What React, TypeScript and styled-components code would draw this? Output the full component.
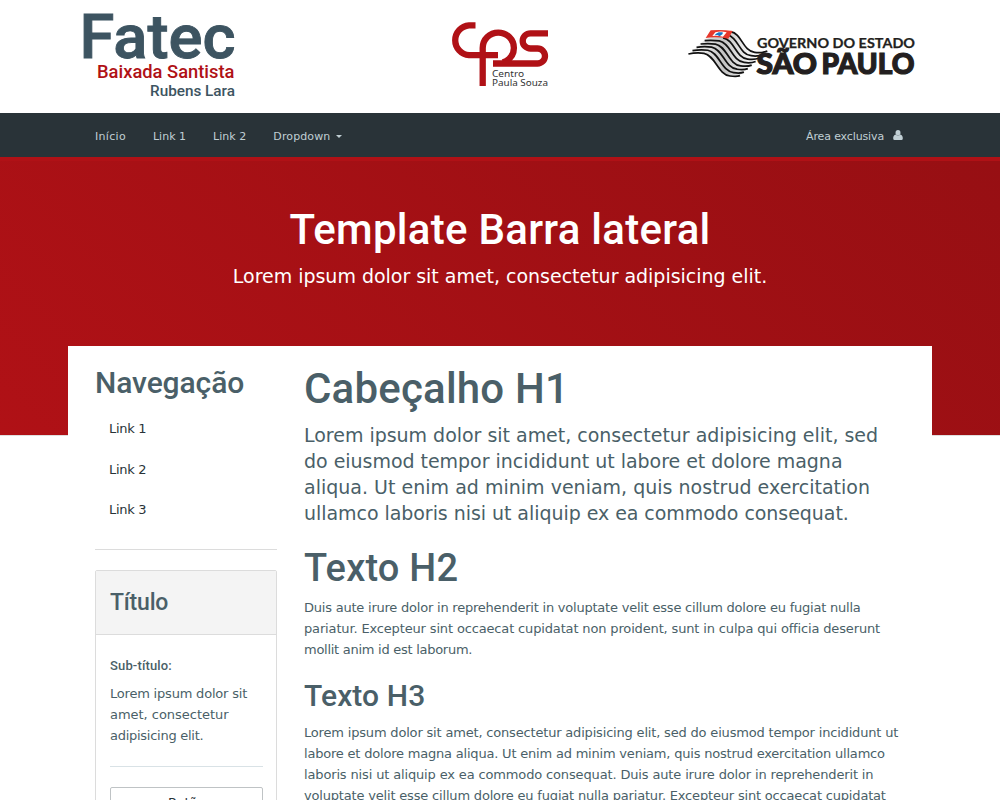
import React from 'react';
import styled, { createGlobalStyle } from 'styled-components';

const Global = createGlobalStyle`
  * { box-sizing: border-box; }
  html, body { margin: 0; height: 800px; overflow: hidden; background: #fff; }
  body { font-family: Verdana, "DejaVu Sans", sans-serif; font-size: 13px; line-height: 21px; color: #4a5f68; }
  h1, h2, h3, p, hr { margin: 0; }
`;

const Page = styled.div`
  height: 800px;
  overflow: hidden;
`;
const Header = styled.header`
  height: 113px;
  display: flex;
  padding-left: 77px;
`;
const FatecLogo = styled.svg` width: 164px; height: 104px; flex: none; overflow: visible; `;
const CpsLogo = styled.svg` width: 104px; height: 72px; flex: none; margin: 19px 0 0 208px; `;
const SpLogo = styled.svg` width: 232px; height: 52px; flex: none; margin: 27px 0 0 133px; `;

const Nav = styled.nav`
  height: 44px;
  background: #293338;
  color: #c0cfd4;
  display: flex;
  align-items: center;
  padding: 2px 97px 0 95px;
  font-size: 11px;
`;
const NavItem = styled.a<{ $gap?: number; $spacing?: number }>`
  display: inline-flex;
  align-items: center;
  white-space: nowrap;
  margin-right: ${p => p.$gap ?? 0}px;
  letter-spacing: ${p => p.$spacing ?? 0}px;
`;
const Caret = styled.span`
  margin-left: 6px;
  border: 3px solid transparent;
  border-top-color: #c0cfd4;
  border-bottom: 0;
`;
const Spacer = styled.div` flex: 1; `;
const UserIcon = styled.svg` width: 10px; height: 10px; margin: -2px 0 0 9px; fill: #c0cfd4; `;

const Hero = styled.section`
  height: 279px;
  border-top: 4px solid #b01116;
  border-bottom: 1px solid #dfdfdf;
  background: linear-gradient(45deg, #b01116, #970f13);
  color: #fff;
  text-align: center;
  padding-top: 44px;
`;
const HeroTitle = styled.h1`
  font: 500 42px/50px Roboto, sans-serif;
  letter-spacing: .28px;
`;
const HeroText = styled.p`
  font-size: 19px;
  line-height: 26px;
  margin-top: 8px;
  letter-spacing: -.02px;
`;

const Container = styled.main`
  position: relative;
  width: 864px;
  height: 460px;
  margin: -90px auto 0;
  background: #fff;
  display: flex;
  padding: 0 27px;
`;
const Sidebar = styled.aside`
  width: 182px;
  margin-right: 27px;
  padding-top: 19px;
  flex: none;
`;
const Content = styled.article`
  flex: 1;
  padding-top: 18px;
  white-space: nowrap;
`;
const Heading = styled.h2<{ $size: number; $line: number; $top?: number; $spacing?: number }>`
  font: 500 ${p => p.$size}px/${p => p.$line}px Roboto, sans-serif;
  margin-top: ${p => p.$top ?? 0}px;
  letter-spacing: ${p => p.$spacing ?? 0}px;
`;
const SideLink = styled.a`
  display: block;
  height: 40.5px;
  padding-left: 14px;
  letter-spacing: -.3px;
  color: #293338;
`;
const LinkList = styled.nav` margin-top: 17px; height: 131px; `;
const Rule = styled.hr<{ $color: string }>`
  border: 0;
  height: 1px;
  background: ${p => p.$color};
`;
const Card = styled.section`
  margin-top: 20px;
  border: 1px solid #dcdcdc;
  border-radius: 2px;
  height: 300px;
`;
const CardHeader = styled.div`
  height: 64px;
  background: #f4f4f4;
  border-bottom: 1px solid #dcdcdc;
  padding: 18px 14px 0;
`;
const CardBody = styled.div` padding: 21px 13px 0 14px; `;
const CardText = styled.p` margin: 7px 0 20px; white-space: nowrap; `;
const Button = styled.div`
  margin-top: 20px;
  height: 38px;
  border: 1px solid #bfc3c5;
  border-radius: 2px;
  text-align: center;
  line-height: 29px;
  letter-spacing: -.2px;
  color: #293338;
`;
const Lead = styled.p`
  margin-top: 8px;
  font-size: 19px;
  line-height: 26px;
`;
const Text = styled.p<{ $top: number }>` margin-top: ${p => p.$top}px; `;
const Line = styled.span<{ $spacing: number }>`
  display: block;
  letter-spacing: ${p => p.$spacing}px;
`;

type Row = [string, number];
const Lines = ({ rows }: { rows: Row[] }) => (
  <>{rows.map(([t, s]) => <Line key={t} $spacing={s}>{t}</Line>)}</>
);

// The flag's stripes run from the crest of the wave down to its trough.
const STRIPES = 8;
const mix = (a: number, b: number, t: number) => a + (b - a) * t;
const stripePath = (i: number) => {
  const t = i / (STRIPES - 1);
  const cx = mix(152, 72, t), cy = mix(35, 100, t);
  const tx = mix(224, 150, t), ty = mix(97, 168, t);
  const ex = mix(262, 180, t), ey = mix(93, 167, t);
  const tail = `C${cx + 34} ${cy + 6} ${tx - 36} ${ty - 4} ${tx} ${ty}Q${tx + 20} ${ty + 3} ${ex} ${ey}`;
  if (i < 3) return `M${cx} ${cy}${tail}`;
  const k = i - 3;
  const sx = 74 - k * 12.2, sy = 62 + k * 10;
  return `M${sx} ${sy}Q${(sx + cx) / 2} ${cy - 3} ${cx} ${cy}${tail}`;
};

export default function App() {
  return (
    <Page>
      <Global />
      <Header>
        <FatecLogo viewBox="77 0 164 104" fontFamily="Roboto, sans-serif">
          <text x="79.500" y="58" fontSize="62" fontWeight="500" stroke="#3d5461" strokeWidth=".9" fill="#3d5461" textLength="156" lengthAdjust="spacingAndGlyphs">Fatec</text>
          <text x="97" y="78" fontSize="18" fontWeight="500" fill="#b01116" textLength="137.500" lengthAdjust="spacingAndGlyphs">Baixada Santista</text>
          <text x="150" y="96" fontSize="15" fontWeight="500" fill="#3d5461" textLength="85" lengthAdjust="spacingAndGlyphs">Rubens Lara</text>
        </FatecLogo>
        <CpsLogo viewBox="449 19 104 72">
          <g fill="none" stroke="#b01116" strokeWidth="6.300">
            <path d="M476.500 25.300H470A15 15 0 0 0 470 55.200H499" transform="translate(-1 0)" />
            <path d="M482.700 86V48A15.600 15.400 0 0 1 513.900 48C513.900 55 509 60 503 62.500" />
            <path d="M548 33.300H530.500A7.800 7.600 0 0 0 530.500 48.500H537.500A7.500 7.500 0 0 1 537.500 63.500H493" />
          </g>
          <g fill="#333" fontFamily="Noto Sans, sans-serif" fontSize="9.300">
            <text x="492" y="77" textLength="32" lengthAdjust="spacingAndGlyphs">Centro</text>
            <text x="492" y="86" textLength="56" lengthAdjust="spacingAndGlyphs">Paula Souza</text>
          </g>
        </CpsLogo>
        <SpLogo viewBox="686 27 232 52">
          <defs>
            <linearGradient id="wave" x1="0" y1="0" x2="1" y2="0">
              <stop offset="0" stopColor="#fff" />
              <stop offset=".45" stopColor="#c4c4c4" />
              <stop offset=".75" stopColor="#f2f2f2" />
              <stop offset="1" stopColor="#fff" />
            </linearGradient>
          </defs>
          <g transform="translate(680 20) scale(.3333)">
            <path d="M78 56L152 35C186 41 190 93 222 97L262 92L180 166L148 167C116 163 102 105 68 99L25 102Z" fill="url(#wave)" />
            <g fill="none" stroke="#111" strokeWidth="5.200">
              {Array.from({ length: STRIPES }, (_, i) => <path key={i} d={stripePath(i)} />)}
            </g>
            <path d="M92 31Q125 28 158 33L145 56Q110 49 77 54Z" fill="#e7372b" />
            <path d="M106 37Q122 32 140 37L129 50Q112 46 97 48Z" fill="#fff" />
            <path d="M108 41L116 37L128 37L128 42L119 49L112 45L104 46Z" fill="#1976c5" />
          </g>
          <g fill="#231f20" stroke="#231f20" fontFamily="Lato, sans-serif">
            <text x="757" y="47.500" fontSize="13" fontWeight="700" strokeWidth=".25" textLength="158" lengthAdjust="spacingAndGlyphs">GOVERNO DO ESTADO</text>
            <g fontSize="27.500" fontWeight="900" strokeWidth="1.200">
              <text x="756.500" y="74" textLength="60.500" lengthAdjust="spacingAndGlyphs">SÃO</text>
              <text x="821.500" y="74" textLength="93" lengthAdjust="spacingAndGlyphs">PAULO</text>
            </g>
          </g>
        </SpLogo>
      </Header>
      <Nav>
        <NavItem $gap={27} $spacing={.3}>Início</NavItem>
        <NavItem $gap={27} $spacing={.03}>Link 1</NavItem>
        <NavItem $gap={27} $spacing={.03}>Link 2</NavItem>
        <NavItem $spacing={.12}>Dropdown<Caret /></NavItem>
        <Spacer />
        <NavItem $spacing={-.13}>
          Área exclusiva
          <UserIcon viewBox="0 0 10 10">
            <ellipse cx="5" cy="2.700" rx="2.500" ry="2.700" />
            <path d="M2.500 4.500C.5 5 .2 7 .2 8.500Q.3 10 1.500 10H8.500Q9.700 10 9.800 8.500C9.800 7 9.500 5 7.500 4.500Q5 6.300 2.500 4.500Z" />
          </UserIcon>
        </NavItem>
      </Nav>
      <Hero>
        <HeroTitle>Template Barra lateral</HeroTitle>
        <HeroText>Lorem ipsum dolor sit amet, consectetur adipisicing elit.</HeroText>
      </Hero>
      <Container>
        <Sidebar>
          <Heading $size={30} $line={36} $spacing={-.1}>Navegação</Heading>
          <LinkList>
            <SideLink>Link 1</SideLink>
            <SideLink>Link 2</SideLink>
            <SideLink>Link 3</SideLink>
          </LinkList>
          <Rule $color="#dcdcdc" />
          <Card>
            <CardHeader><Heading $size={23} $line={28} $spacing={-.2}>Título</Heading></CardHeader>
            <CardBody>
              <Heading as="h3" $size={13} $line={20} $spacing={.15}>Sub-título:</Heading>
              <CardText>
                <Lines rows={[['Lorem ipsum dolor sit', -.2], ['amet, consectetur', -.03], ['adipisicing elit.', -.27]]} />
              </CardText>
              <Rule $color="#d9e2e6" />
              <Button>Botão</Button>
            </CardBody>
          </Card>
        </Sidebar>
        <Content>
          <Heading as="h1" $size={42} $line={50} $spacing={.2}>Cabeçalho H1</Heading>
          <Lead>
            <Lines rows={[
              ['Lorem ipsum dolor sit amet, consectetur adipisicing elit, sed', -.02],
              ['do eiusmod tempor incididunt ut labore et dolore magna', -.03],
              ['aliqua. Ut enim ad minim veniam, quis nostrud exercitation', .01],
              ['ullamco laboris nisi ut aliquip ex ea commodo consequat.', -.05],
            ]} />
          </Lead>
          <Heading $size={38} $line={46} $top={19} $spacing={.2}>Texto H2</Heading>
          <Text $top={6}>
            <Lines rows={[
              ['Duis aute irure dolor in reprehenderit in voluptate velit esse cillum dolore eu fugiat nulla', -.22],
              ['pariatur. Excepteur sint occaecat cupidatat non proident, sunt in culpa qui officia deserunt', -.15],
              ['mollit anim id est laborum.', -.27],
            ]} />
          </Text>
          <Heading as="h3" $size={30} $line={36} $top={18} $spacing={.1}>Texto H3</Heading>
          <Text $top={8}>
            <Lines rows={[
              ['Lorem ipsum dolor sit amet, consectetur adipisicing elit, sed do eiusmod tempor incididunt ut', -.18],
              ['labore et dolore magna aliqua. Ut enim ad minim veniam, quis nostrud exercitation ullamco', -.2],
              ['laboris nisi ut aliquip ex ea commodo consequat. Duis aute irure dolor in reprehenderit in', -.145],
              ['voluptate velit esse cillum dolore eu fugiat nulla pariatur. Excepteur sint occaecat cupidatat', -.18],
            ]} />
          </Text>
        </Content>
      </Container>
    </Page>
  );
}
